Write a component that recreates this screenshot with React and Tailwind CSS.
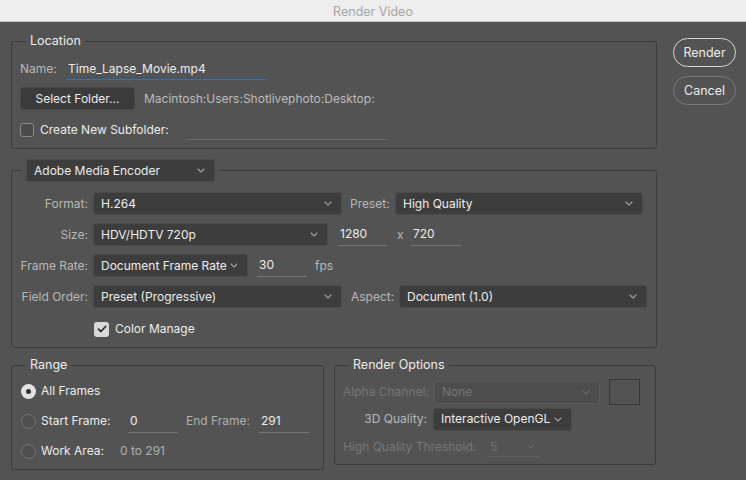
import React from "react";

const Chevron = ({ className = "" }) => (
  <svg width="8" height="5" viewBox="0 0 8 5" className={"shrink-0 " + className}>
    <path d="M1 1l3 3 3-3" fill="none" stroke="currentColor" strokeWidth="1.1" strokeLinecap="round" strokeLinejoin="round" />
  </svg>
);

function Select({ className = "", children, disabled = false }) {
  return (
    <div
      className={
        "flex h-[23px] shrink-0 items-center justify-between rounded-[3px] border pl-[7px] pr-[9px] " +
        (disabled
          ? "border-[#5a5a5a] bg-[#4d4d4d] text-[#767676] "
          : "border-[#4a4a4a] bg-[#3d3d3d] text-[#ececec] ") +
        className
      }
    >
      <span className="whitespace-nowrap">{children}</span>
      <Chevron className={disabled ? "text-[#6a6a6a]" : "text-[#a0a0a0]"} />
    </div>
  );
}

function Field({ className = "", children }) {
  return (
    <div className={"flex h-[23px] shrink-0 items-center border-b border-[#767676] pl-[2px] text-[#ececec] " + className}>
      {children}
    </div>
  );
}

function Radio({ checked }) {
  return checked ? (
    <span className="flex h-[15px] w-[15px] shrink-0 items-center justify-center rounded-full bg-[#e2e2e2]">
      <span className="h-[5px] w-[5px] rounded-full bg-[#333333]" />
    </span>
  ) : (
    <span className="h-[15px] w-[15px] shrink-0 rounded-full border border-[#747474] bg-[#4f4f4f]" />
  );
}

const L = "shrink-0 whitespace-nowrap";

export default function App() {
  return (
    <div className="h-[480px] w-[746px] overflow-hidden bg-[#535353] font-['Inter','Liberation_Sans',sans-serif] text-[12px] leading-[16px] text-[#ececec]">
      {/* title bar */}
      <div className="flex h-[22px] items-center justify-center border-b border-[#c4c4c4] bg-[#eeeeee] pt-[2px] text-[12.5px] text-[#a6a6a6]">
        Render Video
      </div>

      <div className="flex gap-[16px] pl-[11px] pr-[10px]">
        {/* left column */}
        <div className="flex w-[646px] shrink-0 flex-col">
          {/* Location */}
          <fieldset className="mt-[11px] rounded-[3px] border border-[#3c3c3c] pb-[8px]">
            <legend className="ml-[14px] px-[4px] text-[12.5px] text-[#ececec]">Location</legend>
            <div className="flex flex-col pl-[8px]">
              <div className="mt-[9px] flex h-[22px] items-center">
                <span className={L + " w-[46px] text-[#b8b8b8]"}>Name:</span>
                <div className="flex h-[22px] w-[202px] items-center border-b border-[#3d6ea5] pl-[2px]">
                  Time_Lapse_Movie.mp4
                </div>
              </div>
              <div className="mt-[7px] flex h-[23px] items-center">
                <div className="flex h-[23px] w-[115px] shrink-0 items-center justify-center rounded-[3px] border border-[#484848] bg-[#3b3b3b]">
                  Select Folder...
                </div>
                <span className={L + " ml-[9px] text-[#bdbdbd]"}>Macintosh:Users:Shotlivephoto:Desktop:</span>
              </div>
              <div className="mt-[10px] flex h-[20px] items-center">
                <span className="h-[14px] w-[14px] shrink-0 rounded-[3px] border border-[#8a8a8a] bg-[#4a4a4a]" />
                <span className={L + " ml-[6px] w-[147px]"}>Create New Subfolder:</span>
                <div className="h-[20px] w-[201px] border-b border-[#6a6a6a]" />
              </div>
            </div>
          </fieldset>

          {/* Encoder */}
          <fieldset className="mt-[10px] rounded-[3px] border border-[#3c3c3c] pb-[8px]">
            <legend className="ml-[10px] px-[4px]">
              <Select className="h-[22px] w-[189px]">Adobe Media Encoder</Select>
            </legend>
            <div className="mt-[10px] flex flex-col gap-[8px] pl-[8px]">
              <div className="flex h-[23px] items-center">
                <span className={L + " w-[68px] text-right text-[#b8b8b8]"}>Format:</span>
                <Select className="ml-[5px] w-[249px]">H.264</Select>
                <span className={L + " ml-[8px] w-[45px] text-[#b8b8b8]"}>Preset:</span>
                <Select className="w-[248px]">High Quality</Select>
              </div>
              <div className="flex h-[23px] items-center">
                <span className={L + " w-[68px] text-right text-[#b8b8b8]"}>Size:</span>
                <Select className="ml-[5px] w-[235px]">HDV/HDTV 720p</Select>
                <Field className="ml-[10px] w-[49px]">1280</Field>
                <span className={L + " ml-[10px] w-[14px] text-[#b8b8b8]"}>x</span>
                <Field className="w-[50px]">720</Field>
              </div>
              <div className="flex h-[23px] items-center">
                <span className={L + " w-[68px] text-right text-[#b8b8b8]"}>Frame Rate:</span>
                <Select className="ml-[5px] w-[155px]">Document Frame Rate</Select>
                <Field className="ml-[9px] w-[50px]">30</Field>
                <span className={L + " ml-[8px] text-[#b8b8b8]"}>fps</span>
              </div>
              <div className="flex h-[23px] items-center">
                <span className={L + " w-[68px] text-right text-[#b8b8b8]"}>Field Order:</span>
                <Select className="ml-[5px] w-[249px]">Preset (Progressive)</Select>
                <span className={L + " ml-[9px] w-[48px] text-[#b8b8b8]"}>Aspect:</span>
                <Select className="w-[248px]">Document (1.0)</Select>
              </div>
              <div className="mt-[3px] flex h-[20px] items-center">
                <span className="ml-[74px] flex h-[15px] w-[15px] shrink-0 items-center justify-center rounded-[3px] bg-[#d9d9d9]">
                  <svg width="10" height="8" viewBox="0 0 10 8">
                    <path d="M1.5 4.2l2.4 2.3L8.6 1.5" fill="none" stroke="#2e2e2e" strokeWidth="1.8" strokeLinecap="round" strokeLinejoin="round" />
                  </svg>
                </span>
                <span className={L + " ml-[6px]"}>Color Manage</span>
              </div>
            </div>
          </fieldset>

          {/* bottom row */}
          <div className="mt-[9px] flex items-start gap-[10px]">
            <fieldset className="w-[313px] shrink-0 rounded-[3px] border border-[#3c3c3c] pb-[6px]">
              <legend className="ml-[14px] px-[4px] text-[12.5px]">Range</legend>
              <div className="mt-[6px] flex flex-col gap-[6px] pl-[9px]">
                <div className="flex h-[24px] items-center">
                  <Radio checked />
                  <span className={L + " ml-[5px]"}>All Frames</span>
                </div>
                <div className="flex h-[24px] items-center">
                  <Radio />
                  <span className={L + " ml-[5px] w-[87px]"}>Start Frame:</span>
                  <Field className="w-[49px]">0</Field>
                  <span className={L + " ml-[9px] w-[73px] text-[#b0b0b0]"}>End Frame:</span>
                  <Field className="w-[50px]">291</Field>
                </div>
                <div className="flex h-[24px] items-center">
                  <Radio />
                  <span className={L + " ml-[5px] w-[79px]"}>Work Area:</span>
                  <span className={L + " text-[#b0b0b0]"}>0 to 291</span>
                </div>
              </div>
            </fieldset>

            <fieldset className="w-[322px] shrink-0 rounded-[3px] border border-[#3c3c3c] pb-[7px]">
              <legend className="ml-[14px] px-[4px] text-[12.5px]">Render Options</legend>
              <div className="mt-[6px] flex flex-col pl-[8px]">
                <div className="flex h-[26px] items-center">
                  <span className={L + " w-[91px] text-[#767676]"}>Alpha Channel:</span>
                  <Select disabled className="h-[22px] w-[166px]">None</Select>
                  <span className="ml-[9px] h-[26px] w-[31px] shrink-0 border border-[#363636] bg-[#535353]" />
                </div>
                <div className="mt-[3px] flex h-[22px] items-center">
                  <span className={L + " w-[90px] pr-[6px] text-right text-[#b8b8b8]"}>3D Quality:</span>
                  <Select className="h-[22px] w-[139px]">Interactive OpenGL</Select>
                </div>
                <div className="mt-[7px] flex h-[20px] items-center">
                  <span className={L + " w-[143px] text-[#767676]"}>High Quality Threshold:</span>
                  <div className="flex h-[20px] w-[55px] shrink-0 items-center justify-between border-b border-[#5e5e5e] pl-[4px] pr-[6px] text-[#6e6e6e]">
                    <span>5</span>
                    <Chevron className="text-[#666666]" />
                  </div>
                </div>
              </div>
            </fieldset>
          </div>
        </div>

        {/* right column */}
        <div className="flex w-[63px] shrink-0 flex-col gap-[9px] pt-[16px]">
          <div className="flex h-[29px] items-center justify-center rounded-full border-[1.5px] border-[#d6d6d6] text-[12.5px] text-[#ececec]">
            Render
          </div>
          <div className="flex h-[29px] items-center justify-center rounded-full border border-[#7a7a7a] text-[12.5px] text-[#ececec]">
            Cancel
          </div>
        </div>
      </div>
    </div>
  );
}
